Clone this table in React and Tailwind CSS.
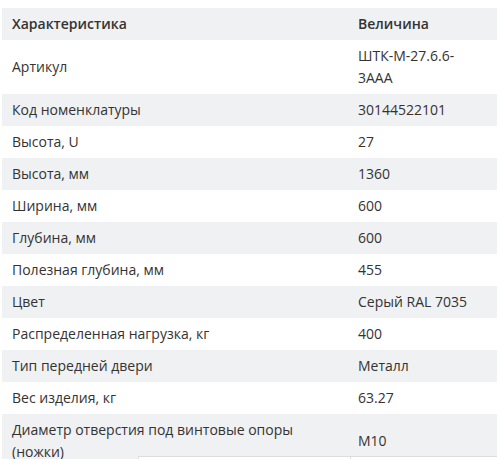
import React from "react";

const rows = [
  ["Артикул", "ШТК-М-27.6.6-3ААА"],
  ["Код номенклатуры", "30144522101"],
  ["Высота, U", "27"],
  ["Высота, мм", "1360"],
  ["Ширина, мм", "600"],
  ["Глубина, мм", "600"],
  ["Полезная глубина, мм", "455"],
  ["Цвет", "Серый RAL 7035"],
  ["Распределенная нагрузка, кг", "400"],
  ["Тип передней двери", "Металл"],
  ["Вес изделия, кг", "63.27"],
  ["Диаметр отверстия под винтовые опоры (ножки)", "M10"],
];

const App = () => {
  return (
    <div className="relative h-[459px] w-[503px] overflow-hidden bg-white pt-2 pl-[2px] font-['Open_Sans',sans-serif] text-[14px] leading-[22px] text-[#333333]">
      <table className="w-[495px] table-fixed border-collapse">
        <colgroup>
          <col className="w-[347px]" />
          <col className="w-[148px]" />
        </colgroup>
        <thead>
          <tr className="bg-[#f0f1f3]">
            <th className="px-[10px] py-[5px] text-left font-semibold">Характеристика</th>
            <th className="px-[9px] py-[5px] text-left font-semibold">Величина</th>
          </tr>
        </thead>
        <tbody>
          {rows.map(([label, value], i) => (
            <tr key={label} className={i % 2 === 1 ? "bg-[#f0f1f3]" : "bg-white"}>
              <td className="px-[10px] py-[5px] align-middle">{label}</td>
              <td className="px-[9px] py-[5px] align-middle">{value}</td>
            </tr>
          ))}
        </tbody>
      </table>

      {/* край нижнего блока, наезжающий на таблицу */}
      <div className="absolute top-[456px] left-[138px] flex h-10 w-[359px] border-t border-l border-[#dcdcdc] bg-white">
        <div className="w-[211px]" />
        <div className="flex-1 border-l border-[#dcdcdc]" />
      </div>
    </div>
  );
};

export default App;
